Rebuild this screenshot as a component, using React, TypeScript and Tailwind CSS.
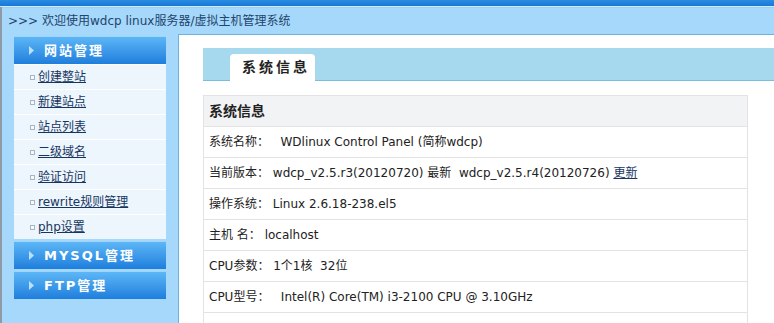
import React from 'react'

const font = "font-['DejaVu_Sans','Noto_Sans_CJK_SC',sans-serif]"

const links = ['创建整站', '新建站点', '站点列表', '二级域名', '验证访问', 'rewrite规则管理', 'php设置']

function Arrow() {
  return (
    <svg width="5" height="9" viewBox="0 0 5 9" className="shrink-0">
      <path d="M0 0 L5 4.5 L0 9 Z" fill="#b9e1fc" />
    </svg>
  )
}

function MenuHead({ label }: { label: string }) {
  return (
    <div className="flex h-[28px] items-center gap-[10px] border-t border-[#9ed6fb] bg-gradient-to-b from-[#5cb6f6] to-[#1d7edc] pl-[15px]">
      <Arrow />
      <span className="text-[13px] font-bold tracking-[2px] text-white">{label}</span>
    </div>
  )
}

function InfoRow({ children }: { children: React.ReactNode }) {
  return (
    <div className="flex h-[31px] items-center whitespace-pre border-b border-[#e3e3e3] pl-[5px] text-[12px] text-[#222]">
      {children}
    </div>
  )
}

export default function App() {
  return (
    <div className={`h-[323px] w-[774px] overflow-hidden bg-[#a6d8fb] ${font}`}>
      <div className="h-[6px] bg-gradient-to-b from-[#2a8ce2] to-[#1877d6]" />
      <div className="h-px bg-[#d2ecff]" />
      <div className="flex flex-col border-l-2 border-[#8e9aa6]">
        <div className="flex h-[27px] items-center border-t border-[#9ccff4] pb-[1px] pl-[6px] text-[12px] text-[#23446b]">
          &gt;&gt;&gt; 欢迎使用wdcp linux服务器/虚拟主机管理系统
        </div>
        <div className="flex h-[289px]">
          <aside className="w-[176px] shrink-0 pl-[12px] pt-[2px]">
            <div className="w-[152px]">
              <MenuHead label="网站管理" />
              {links.map(l => (
                <div key={l} className="flex h-[25px] items-center gap-[3px] border-t border-white bg-[#edf5fd] pl-[16px]">
                  <span className="h-[5px] w-[5px] border border-[#a3b6ca] bg-[#f7fafd]" />
                  <a href="#" className="text-[12px] text-[#17365f] underline">{l}</a>
                </div>
              ))}
              <div className="mt-[2px]">
                <MenuHead label="MYSQL管理" />
              </div>
              <div className="mt-[2px]">
                <MenuHead label="FTP管理" />
              </div>
            </div>
          </aside>
          <main className="flex-1 border-l border-t border-[#6cb2dc] bg-white pl-[24px] pt-[13px]">
            <div className="flex h-[33px] items-end border-b border-[#7cbcda] bg-[#a6d9ee] pl-[27px]">
              <div className="-mb-px flex h-[27px] w-[85px] items-center rounded-t-[4px] bg-white pl-[12px] text-[14px] font-bold tracking-[3px] text-[#222]">
                系统信息
              </div>
            </div>
            <div className="mt-[14px] w-[545px] border-l border-r border-t border-[#e3e3e3]">
              <div className="flex h-[31px] items-center border-b border-[#e3e3e3] bg-[#f2f3f5] pl-[5px] text-[14px] font-bold text-[#222]">
                系统信息
              </div>
              <InfoRow>{'系统名称：   WDlinux Control Panel (简称wdcp)'}</InfoRow>
              <InfoRow>
                {'当前版本： wdcp_v2.5.r3(20120720) 最新  wdcp_v2.5.r4(20120726) '}
                <a href="#" className="text-[#17365f] underline">更新</a>
              </InfoRow>
              <InfoRow>{'操作系统： Linux 2.6.18-238.el5'}</InfoRow>
              <InfoRow>{'主机 名： localhost'}</InfoRow>
              <InfoRow>{'CPU参数： 1个1核  32位'}</InfoRow>
              <InfoRow>{'CPU型号：   Intel(R) Core(TM) i3-2100 CPU @ 3.10GHz'}</InfoRow>
              <InfoRow> </InfoRow>
            </div>
          </main>
        </div>
      </div>
    </div>
  )
}
